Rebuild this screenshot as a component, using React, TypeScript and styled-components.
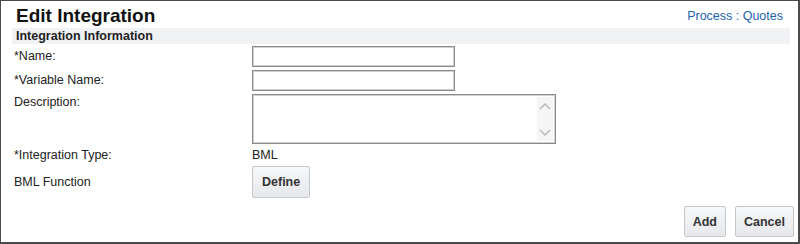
import React from 'react'
import styled, { createGlobalStyle } from 'styled-components'

const Global = createGlobalStyle`
  body {
    margin: 0;
    background: #fff;
    font-family: "Liberation Sans", Arial, sans-serif;
    color: #222;
  }
`

const Page = styled.div`
  width: 800px;
  height: 244px;
  box-sizing: border-box;
  border: solid #4a4a4a;
  border-width: 1px 2px 2px 1px;
  display: flex;
  flex-direction: column;
  background: #fff;
`

const Header = styled.div`
  display: flex;
  justify-content: space-between;
  align-items: flex-end;
  height: 27px;
  padding: 0 15px 0 15px;
`

const Title = styled.h1`
  margin: 0;
  font-size: 19px;
  font-weight: bold;
  color: #111;
  line-height: 22px;
  padding-bottom: 1px;
`

const Crumb = styled.a`
  font-size: 12.5px;
  color: #2164ad;
  text-decoration: none;
  line-height: 14px;
  margin-bottom: 5px;
`

const Section = styled.div`
  margin: 0 8px 0 11px;
  height: 16px;
  padding-left: 4px;
  background: #eff1f5;
  font-size: 12.5px;
  font-weight: bold;
  line-height: 16px;
  color: #222;
`

const Form = styled.div`
  display: flex;
  flex-direction: column;
  gap: 3px;
  padding: 2px 0 0 13px;
`

const Row = styled.div<{ $top?: boolean; $space?: number }>`
  display: grid;
  grid-template-columns: 238px auto;
  align-items: ${(p) => (p.$top ? 'start' : 'center')};
  margin-top: ${(p) => p.$space ?? 0}px;
`

const Label = styled.div<{ $pad?: number }>`
  font-size: 12.5px;
  line-height: 15px;
  color: #222;
  padding-top: ${(p) => p.$pad ?? 0}px;
`

const Value = styled.div`
  font-size: 12.5px;
  line-height: 15px;
  color: #222;
`

const Input = styled.input`
  width: 203px;
  height: 21px;
  box-sizing: border-box;
  margin: 0;
  border: 1px solid #8a8a8a;
  box-shadow: inset 0 0 0 1px #d0d0d0;
  background: #fff;
  font-family: inherit;
`

const AreaBox = styled.div`
  width: 304px;
  height: 50px;
  box-sizing: border-box;
  border: 1px solid #8a8a8a;
  box-shadow: inset 0 0 0 1px #d0d0d0;
  display: flex;
  justify-content: flex-end;
  padding: 2px;
`

const ScrollTrack = styled.div`
  width: 16px;
  background: #f5f5f5;
  display: flex;
  flex-direction: column;
  justify-content: space-between;
  align-items: center;
  padding: 5px 0 4px;
  box-sizing: border-box;
`

const Button = styled.button<{ $pad?: number }>`
  height: 32px;
  padding: 0 ${(p) => p.$pad ?? 8}px;
  box-sizing: border-box;
  border: 1px solid #c3c8ce;
  border-radius: 2px;
  background: linear-gradient(#f6f7f8, #e6e8eb);
  font-family: inherit;
  font-size: 12.5px;
  font-weight: bold;
  color: #333;
`

const Actions = styled.div`
  display: flex;
  justify-content: flex-end;
  gap: 9px;
  padding: 8px 4px 0 0;

  ${Button} {
    height: 31px;
  }
`

const Chevron = ({ up }: { up?: boolean }) => (
  <svg width="12" height="8" viewBox="0 0 12 8">
    <path
      d={up ? 'M1 7 L6 2 L11 7' : 'M1 1 L6 6 L11 1'}
      fill="none"
      stroke="#b9b9b9"
      strokeWidth="1.5"
    />
  </svg>
)

export default function App() {
  return (
    <Page>
      <Global />
      <Header>
        <Title>Edit Integration</Title>
        <Crumb>Process : Quotes</Crumb>
      </Header>
      <Section>Integration Information</Section>
      <Form>
        <Row>
          <Label>*Name:</Label>
          <Input />
        </Row>
        <Row>
          <Label>*Variable Name:</Label>
          <Input />
        </Row>
        <Row $top>
          <Label $pad={1}>Description:</Label>
          <AreaBox>
            <ScrollTrack>
              <Chevron up />
              <Chevron />
            </ScrollTrack>
          </AreaBox>
        </Row>
        <Row $space={1}>
          <Label>*Integration Type:</Label>
          <Value>BML</Value>
        </Row>
        <Row>
          <Label>BML Function</Label>
          <div>
            <Button $pad={9}>Define</Button>
          </div>
        </Row>
      </Form>
      <Actions>
        <Button>Add</Button>
        <Button>Cancel</Button>
      </Actions>
    </Page>
  )
}
